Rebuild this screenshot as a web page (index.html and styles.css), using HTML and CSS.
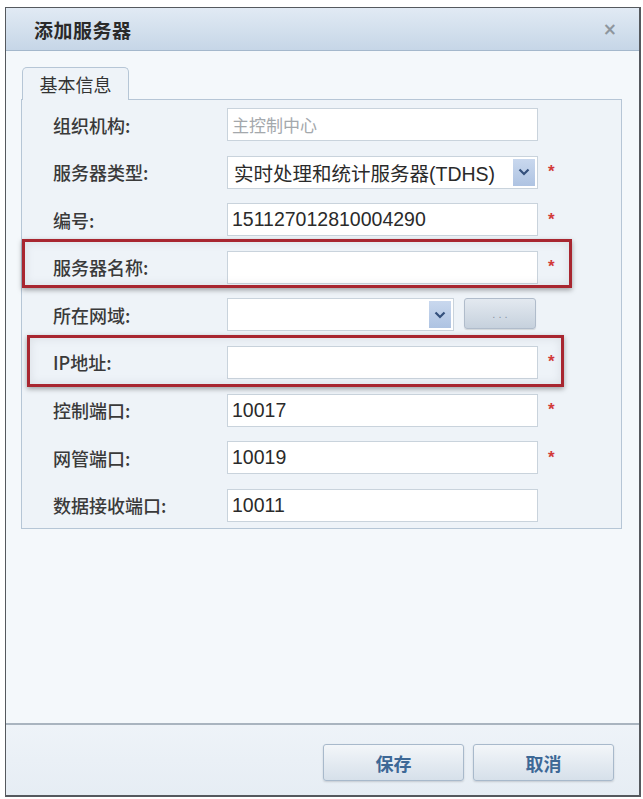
FILE: index.html
```html
<!DOCTYPE html>
<html lang="zh-CN">
<head>
<meta charset="utf-8">
<title>添加服务器</title>
<link rel="stylesheet" href="styles.css">
</head>
<body>
<div class="dialog">
  <div class="titlebar">
    <span class="title">添加服务器</span>
    <span class="close">×</span>
  </div>
  <div class="content">
    <div class="tabs"><div class="tab">基本信息</div></div>
    <div class="panel">
      <div class="form">
        <label class="label">组织机构:</label>
        <div class="field"><div class="input readonly">主控制中心</div></div>
        <span class="req"></span>

        <label class="label">服务器类型:</label>
        <div class="field"><div class="input select">实时处理和统计服务器(TDHS)<span class="arrow"><svg viewBox="0 0 12 8" width="12" height="8"><path d="M1.5 1.5 L6 6 L10.5 1.5" fill="none" stroke="#34507c" stroke-width="2.2"/></svg></span></div></div>
        <span class="req">*</span>

        <label class="label">编号:</label>
        <div class="field"><div class="input">151127012810004290</div></div>
        <span class="req">*</span>

        <label class="label">服务器名称:</label>
        <div class="field"><div class="input"></div></div>
        <span class="req">*</span>

        <label class="label">所在网域:</label>
        <div class="field domain">
          <div class="input select short"><span class="arrow"><svg viewBox="0 0 12 8" width="12" height="8"><path d="M1.5 1.5 L6 6 L10.5 1.5" fill="none" stroke="#34507c" stroke-width="2.2"/></svg></span></div>
          <button class="more">. . .</button>
        </div>
        <span class="req"></span>

        <label class="label">IP地址:</label>
        <div class="field"><div class="input"></div></div>
        <span class="req">*</span>

        <label class="label">控制端口:</label>
        <div class="field"><div class="input">10017</div></div>
        <span class="req">*</span>

        <label class="label">网管端口:</label>
        <div class="field"><div class="input">10019</div></div>
        <span class="req">*</span>

        <label class="label">数据接收端口:</label>
        <div class="field"><div class="input">10011</div></div>
        <span class="req"></span>
      </div>
      <div class="mark mark-name"></div>
      <div class="mark mark-ip"></div>
    </div>
  </div>
  <div class="footer">
    <button class="btn">保存</button>
    <button class="btn">取消</button>
  </div>
</div>
</body>
</html>
```
FILE: styles.css
```css
html, body {
  margin: 0;
  padding: 0;
  background: #ffffff;
}

body {
  font-family: "Noto Sans CJK SC", "Noto Sans", sans-serif;
  color: #333;
}

.dialog {
  margin: 7px 0 0 5px;
  width: 636px;
  height: 790px;
  box-sizing: border-box;
  border: 1px solid #55595e;
  border-right-width: 2px;
  border-bottom-width: 2px;
  display: flex;
  flex-direction: column;
  background: #f3f7fa;
}

/* title bar */
.titlebar {
  height: 42px;
  flex: none;
  display: flex;
  align-items: center;
  justify-content: space-between;
  padding: 0 22px 0 28px;
  background: linear-gradient(#e1eaf4, #c6d6e7);
  border-bottom: 1px solid #a4b8cc;
}

.title {
  font-size: 19px;
  font-weight: 700;
  color: #2a2a2a;
  letter-spacing: 0.5px;
}

.close {
  font-family: "DejaVu Sans", sans-serif;
  font-size: 17px;
  font-weight: 700;
  color: #8e969e;
}

/* main area */
.content {
  flex: 1;
  padding: 16px 17px 0 15px;
  background: #f4f8fb;
}

.tabs {
  display: flex;
  padding-left: 1px;
}

.tab {
  width: 107px;
  height: 33px;
  box-sizing: border-box;
  border: 1px solid #b6c6d6;
  border-bottom: none;
  border-radius: 5px 5px 0 0;
  background: #eef3f8;
  font-size: 18px;
  color: #333;
  display: flex;
  align-items: center;
  justify-content: center;
  margin-bottom: -1px;
  position: relative;
  z-index: 1;
}

.panel {
  position: relative;
  border: 1px solid #b6c6d6;
  background: #eef3f8;
  padding: 8px 0 6px 31px;
}

.form {
  display: grid;
  grid-template-columns: 174px 311px 30px;
  grid-auto-rows: 33px;
  row-gap: 14.6px;
  align-items: center;
}

.label {
  font-size: 18px;
  font-weight: 500;
  color: #3a3a3a;
}

.field {
  height: 33px;
  display: flex;
  gap: 10px;
}

.input {
  position: relative;
  flex: 1;
  box-sizing: border-box;
  height: 33px;
  background: #fff;
  border: 1px solid #c9d3dc;
  font-family: "Liberation Sans", "Noto Sans CJK SC", sans-serif;
  font-size: 19.5px;
  color: #2a2a2a;
  padding: 0 4px;
  display: flex;
  align-items: center;
  white-space: nowrap;
}

.input.readonly {
  font-family: "Noto Sans CJK SC", sans-serif;
  font-size: 17px;
  color: #a4a8ac;
}

.input.select {
  font-family: "Liberation Sans", "Noto Sans CJK SC", sans-serif;
  padding-left: 6px;
}

.input.short {
  flex: none;
  width: 227px;
}

.arrow {
  position: absolute;
  top: 2px;
  right: 2px;
  bottom: 2px;
  width: 22px;
  background: linear-gradient(#c9d8ee, #aec3e2);
  display: flex;
  align-items: center;
  justify-content: center;
}

.more {
  width: 72px;
  height: 31px;
  margin-top: 0;
  border: 1px solid #b0bccb;
  border-radius: 3px;
  background: linear-gradient(#e3e9f0, #c6d1dd);
  color: #8a96a4;
  font-family: "Liberation Sans", sans-serif;
  font-size: 11px;
  padding: 0;
  box-shadow: 0 1px 1px rgba(0, 0, 0, 0.12);
}

.req {
  color: #d23a3a;
  font-family: "Liberation Sans", sans-serif;
  font-size: 17px;
  font-weight: 700;
  padding-left: 10px;
}

/* highlight frames around the required entries */
.mark {
  position: absolute;
  border: 3px solid #a82630;
  box-shadow: 0 2px 5px rgba(0, 0, 0, 0.35), inset 0 0 10px rgba(120, 130, 140, 0.18);
  pointer-events: none;
}

.mark-name {
  left: 0;
  top: 139px;
  width: 544px;
  height: 43px;
}

.mark-ip {
  left: 5px;
  top: 235px;
  width: 531px;
  height: 46px;
}

/* footer buttons */
.footer {
  flex: none;
  height: 72px;
  box-sizing: border-box;
  border-top: 2px solid #a9b4bf;
  background: linear-gradient(#eef3f8, #e6edf4);
  display: flex;
  justify-content: flex-end;
  align-items: flex-start;
  gap: 9px;
  padding: 19px 25px 0 0;
}

.btn {
  width: 141px;
  height: 37px;
  border: 1px solid #a8b9cb;
  border-radius: 3px;
  background: linear-gradient(#f3f6f9, #d6e0ea);
  font-family: "Noto Sans CJK SC", sans-serif;
  font-size: 18px;
  font-weight: 700;
  color: #3d6896;
  box-shadow: 0 1px 2px rgba(0, 0, 0, 0.15);
  padding: 0;
}
```
